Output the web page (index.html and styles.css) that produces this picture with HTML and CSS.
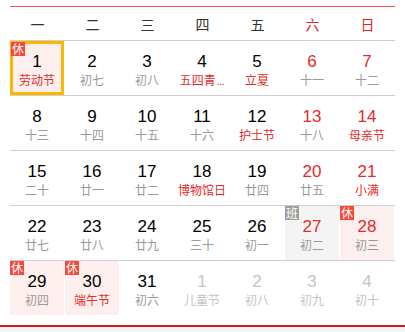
FILE: index.html
```html
<!DOCTYPE html>
<html lang="zh-CN">
<head>
<meta charset="utf-8">
<title>日历</title>
<link rel="stylesheet" href="styles.css">
</head>
<body>
<div class="calendar">
  <div class="week">
    <span>一</span><span>二</span><span>三</span><span>四</span><span>五</span><span class="we">六</span><span class="we">日</span>
  </div>
  <div class="row">
    <div class="cell rest selected"><i class="badge">休</i><b>1</b><em class="fest">劳动节</em></div>
    <div class="cell"><b>2</b><em>初七</em></div>
    <div class="cell"><b>3</b><em>初八</em></div>
    <div class="cell"><b>4</b><em class="fest">五四青<span class="dots">...</span></em></div>
    <div class="cell"><b>5</b><em class="fest">立夏</em></div>
    <div class="cell weekend"><b>6</b><em>十一</em></div>
    <div class="cell weekend"><b>7</b><em>十二</em></div>
  </div>
  <div class="row">
    <div class="cell"><b>8</b><em>十三</em></div>
    <div class="cell"><b>9</b><em>十四</em></div>
    <div class="cell"><b>10</b><em>十五</em></div>
    <div class="cell"><b>11</b><em>十六</em></div>
    <div class="cell"><b>12</b><em class="fest">护士节</em></div>
    <div class="cell weekend"><b>13</b><em>十八</em></div>
    <div class="cell weekend"><b>14</b><em class="fest">母亲节</em></div>
  </div>
  <div class="row">
    <div class="cell"><b>15</b><em>二十</em></div>
    <div class="cell"><b>16</b><em>廿一</em></div>
    <div class="cell"><b>17</b><em>廿二</em></div>
    <div class="cell"><b>18</b><em class="fest">博物馆日</em></div>
    <div class="cell"><b>19</b><em>廿四</em></div>
    <div class="cell weekend"><b>20</b><em>廿五</em></div>
    <div class="cell weekend"><b>21</b><em class="fest">小满</em></div>
  </div>
  <div class="row">
    <div class="cell"><b>22</b><em>廿七</em></div>
    <div class="cell"><b>23</b><em>廿八</em></div>
    <div class="cell"><b>24</b><em>廿九</em></div>
    <div class="cell"><b>25</b><em>三十</em></div>
    <div class="cell"><b>26</b><em>初一</em></div>
    <div class="cell weekend work"><i class="badge gray">班</i><b>27</b><em>初二</em></div>
    <div class="cell weekend rest"><i class="badge">休</i><b>28</b><em>初三</em></div>
  </div>
  <div class="row last">
    <div class="cell rest"><i class="badge">休</i><b>29</b><em>初四</em></div>
    <div class="cell rest"><i class="badge">休</i><b>30</b><em class="fest">端午节</em></div>
    <div class="cell"><b>31</b><em>初六</em></div>
    <div class="cell other"><b>1</b><em>儿童节</em></div>
    <div class="cell other"><b>2</b><em>初八</em></div>
    <div class="cell other"><b>3</b><em>初九</em></div>
    <div class="cell other"><b>4</b><em>初十</em></div>
  </div>
</div>
<div class="footer"></div>
</body>
</html>
```
FILE: styles.css
```css
html, body {
  margin: 0;
  padding: 0;
  background: #fff;
}
body {
  width: 405px;
  height: 332px;
  overflow: hidden;
  font-family: "Liberation Sans", "Noto Sans CJK SC", sans-serif;
}
.calendar {
  margin: 6px 10px 0;
  width: 385px;
  border-top: 1px solid #f2554b;
}
.week {
  display: grid;
  grid-template-columns: repeat(7, 55px);
  height: 33px;
  border-bottom: 1px solid #cfcfcf;
  font-family: "Noto Sans CJK SC", sans-serif;
  font-size: 14px;
  color: #333;
}
.week span {
  display: flex;
  align-items: center;
  justify-content: center;
}
.week .we {
  color: #e62222;
}
.row {
  display: grid;
  grid-template-columns: repeat(7, 55px);
  height: 54px;
  border-bottom: 1px solid #cfcfcf;
}
.row.last {
  border-bottom: none;
}
.cell {
  position: relative;
  width: 54px;
  height: 54px;
  box-sizing: border-box;
  padding-top: 11px;
  display: flex;
  flex-direction: column;
  align-items: center;
  text-align: center;
}
.cell b {
  font-weight: normal;
  font-size: 17px;
  line-height: 20px;
  color: #000;
}
.cell em {
  font-style: normal;
  font-family: "Noto Sans CJK SC", sans-serif;
  font-size: 12px;
  line-height: 16px;
  color: #999;
  white-space: nowrap;
}
.cell em .dots {
  font-family: "Liberation Sans", sans-serif;
  font-size: 11px;
  letter-spacing: -0.5px;
  margin-left: 1px;
}
.cell em.fest {
  color: #e52a2a;
}
.weekend b {
  color: #e62a2a;
}
.rest {
  background: #fdefee;
}
.work {
  background: #f4f4f4;
}
.selected {
  border: 3px solid #fdb703;
  padding-top: 8px;
}
.badge {
  position: absolute;
  top: 0;
  left: 0;
  width: 14px;
  height: 14px;
  background: #f7483a;
  color: #fff;
  font-style: normal;
  font-family: "Noto Sans CJK SC", sans-serif;
  font-size: 12px;
  line-height: 14px;
  text-align: center;
}
.badge.gray {
  background: #9d9d9d;
}
.selected .badge {
  top: -2px;
  left: -2px;
}
.other b,
.other em {
  color: #c4c4c4;
}
.footer {
  margin-top: 10px;
  height: 5px;
  border-top: 2px solid #d2191c;
  background: #f3f3f3;
}
```
